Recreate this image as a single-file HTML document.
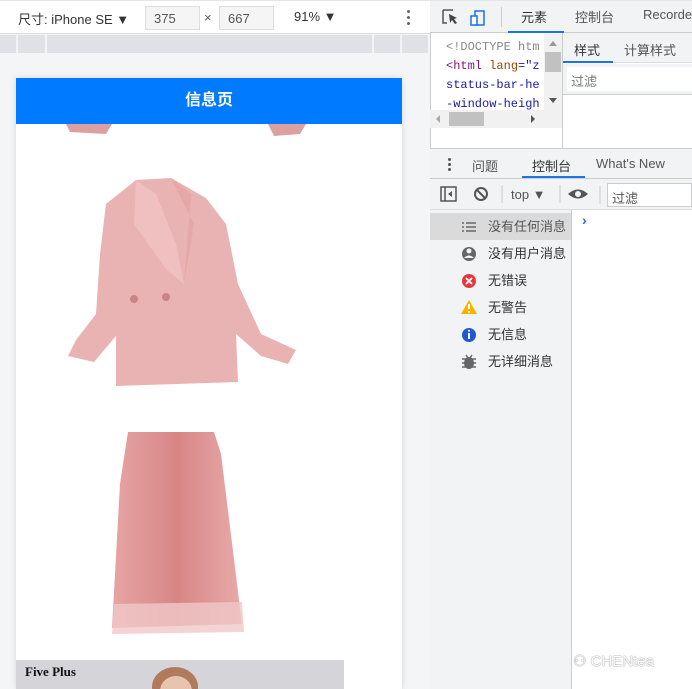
<!DOCTYPE html>
<html><head><meta charset="utf-8"><style>
*{margin:0;padding:0;box-sizing:border-box}
html,body{width:692px;height:689px;overflow:hidden}
body{position:relative;background:#f4f5f6;font-family:"Liberation Sans","Noto Sans CJK SC",sans-serif;font-size:13px;color:#333}
.a{position:absolute}
.mono{font-family:"Liberation Mono",monospace;font-size:12px}
</style></head><body>
<div class="a" style="left:0;top:0;width:430px;height:34px;background:#fff;border-bottom:1px solid #ddd;border-top:1px solid #e5e5e5"></div>
<div class="a" style="left:18px;top:9px;font-size:13px;color:#333">尺寸: iPhone SE ▼</div>
<div class="a" style="left:145px;top:6px;width:55px;height:24px;border:1px solid #ddd;background:#f5f5f5;color:#555;padding:4px 8px">375</div>
<div class="a" style="left:204px;top:10px;color:#555">×</div>
<div class="a" style="left:219px;top:6px;width:55px;height:24px;border:1px solid #ddd;background:#f5f5f5;color:#555;padding:4px 8px">667</div>
<div class="a" style="left:294px;top:9px;color:#333">91% ▼</div>
<div class="a" style="left:407px;top:10px;width:3px;height:3px;background:#666;border-radius:50%;box-shadow:0 6px 0 #666,0 12px 0 #666"></div>
<div class="a" style="left:0;top:35px;width:428px;height:18px;background:#dfe1e5"></div>
<div class="a" style="left:16px;top:35px;width:2px;height:18px;background:#f3f3f3"></div>
<div class="a" style="left:45px;top:35px;width:2px;height:18px;background:#f3f3f3"></div>
<div class="a" style="left:372px;top:35px;width:2px;height:18px;background:#f3f3f3"></div>
<div class="a" style="left:400px;top:35px;width:2px;height:18px;background:#f3f3f3"></div>
<div class="a" style="left:16px;top:78px;width:386px;height:611px;background:#fff;box-shadow:0 0 6px rgba(0,0,0,.12)"></div>
<div class="a" style="left:16px;top:78px;width:386px;height:46px;background:#007aff;color:#fff;font-weight:bold;font-size:16px;text-align:center;line-height:46px">信息页</div>
<svg class="a" style="left:16px;top:124px" width="386" height="536">
<defs><linearGradient id="sk" x1="0" x2="1"><stop offset="0" stop-color="#e7a4a4"/><stop offset=".5" stop-color="#d88686"/><stop offset="1" stop-color="#e8aaaa"/></linearGradient></defs>
<path d="M50 0 L96 0 L90 10 L54 8Z" fill="#dca0a0"/>
<path d="M252 0 L290 0 L284 10 L258 12Z" fill="#dca0a0"/>
<path d="M90 80 L120 56 L155 54 L190 74 L210 100 L222 160 L245 210 L280 226 L272 240 L245 232 L220 210 L222 258 L100 262 L100 212 L78 238 L52 232 L60 216 L80 190 L84 130Z" fill="#eab3b3"/>
<path d="M120 56 L140 70 L160 120 L168 160 L150 145 L118 100Z" fill="#f0c0c0"/>
<path d="M155 54 L175 70 L168 160 L178 100Z" fill="#e4a8a8"/>
<circle cx="118" cy="175" r="4" fill="#c98585"/><circle cx="150" cy="173" r="4" fill="#c98585"/>
<path d="M112 308 L198 308 L205 330 L226 500 L96 504 L104 360Z" fill="url(#sk)"/>
<path d="M98 480 L226 478 L228 508 L96 510Z" fill="#f0c8c8" opacity=".8"/>
</svg>
<div class="a" style="left:16px;top:660px;width:328px;height:29px;background:#d4d4d9"></div>
<div class="a" style="left:25px;top:664px;font-family:'Liberation Serif',serif;font-weight:bold;font-size:13px;color:#111">Five Plus</div>
<div class="a" style="left:152px;top:667px;width:46px;height:40px;border-radius:50%;background:#b07a5e"></div>
<div class="a" style="left:160px;top:676px;width:32px;height:30px;border-radius:50%;background:#e8c4ae"></div>
<div class="a" style="left:430px;top:0;width:262px;height:689px;background:#fff;border-left:1px solid #ccc"></div>
<div class="a" style="left:430px;top:0;width:262px;height:33px;background:#f1f3f4;border-bottom:1px solid #ccc;border-top:1px solid #e5e5e5"></div>
<svg class="a" style="left:441px;top:8px" width="60" height="18"><path d="M2 2h10M2 2v13h4" stroke="#555" fill="none" stroke-width="1.5"/><path d="M8 6l8 4-3 1 3 4-2 1-3-4-2 3z" fill="#444"/><rect x="34" y="3" width="9" height="14" fill="none" stroke="#1a73e8" stroke-width="1.5"/><rect x="30" y="8" width="6" height="9" fill="#fff" stroke="#1a73e8" stroke-width="1.5"/></svg>
<div class="a" style="left:501px;top:7px;width:1px;height:20px;background:#ccc"></div>
<div class="a" style="left:521px;top:7px;color:#333">元素</div>
<div class="a" style="left:508px;top:31px;width:56px;height:2px;background:#1a73e8"></div>
<div class="a" style="left:575px;top:7px;color:#555">控制台</div>
<div class="a" style="left:643px;top:7px;color:#555;white-space:nowrap">Recorde</div>
<div class="a mono" style="left:446px;top:38px;line-height:19px;white-space:pre;color:#888">&lt;!DOCTYPE htm</div>
<div class="a mono" style="left:446px;top:57px;line-height:19px;white-space:pre"><span style="color:#881280">&lt;html</span> <span style="color:#994500">lang</span><span style="color:#1a1aa6">="z</span></div>
<div class="a mono" style="left:446px;top:76px;line-height:19px;color:#1a1aa6">status-bar-he</div>
<div class="a mono" style="left:446px;top:95px;line-height:19px;color:#1a1aa6">-window-heigh</div>
<div class="a" style="left:544px;top:34px;width:18px;height:76px;background:#f1f1f1"></div>
<div class="a" style="left:545px;top:52px;width:16px;height:20px;background:#c1c1c1"></div>
<div class="a" style="left:549px;top:41px;border:4px solid transparent;border-bottom:5px solid #999;border-top:0"></div>
<div class="a" style="left:549px;top:98px;border:4px solid transparent;border-top:5px solid #555;border-bottom:0"></div>
<div class="a" style="left:430px;top:110px;width:132px;height:18px;background:#f1f1f1"></div>
<div class="a" style="left:449px;top:112px;width:35px;height:14px;background:#c1c1c1"></div>
<div class="a" style="left:436px;top:115px;border:4px solid transparent;border-right:4px solid #aaa;border-left:0"></div>
<div class="a" style="left:531px;top:115px;border:4px solid transparent;border-left:4px solid #555;border-right:0"></div>
<div class="a" style="left:562px;top:33px;width:1px;height:115px;background:#ccc"></div>
<div class="a" style="left:563px;top:33px;width:129px;height:30px;background:#f1f3f4;border-bottom:1px solid #ddd"></div>
<div class="a" style="left:574px;top:40px;color:#333">样式</div>
<div class="a" style="left:563px;top:61px;width:50px;height:2px;background:#1a73e8"></div>
<div class="a" style="left:624px;top:40px;color:#555">计算样式</div>
<div class="a" style="left:563px;top:64px;width:129px;height:31px;background:#f1f3f4;border-bottom:1px solid #ccc"></div>
<div class="a" style="left:567px;top:67px;width:125px;height:24px;background:#fff;color:#777;padding:4px 4px">过滤</div>
<div class="a" style="left:430px;top:148px;width:262px;height:31px;background:#f1f3f4;border-top:1px solid #ccc;border-bottom:1px solid #ccc"></div>
<div class="a" style="left:448px;top:158px;width:3px;height:3px;background:#555;border-radius:50%;box-shadow:0 5px 0 #555,0 10px 0 #555"></div>
<div class="a" style="left:472px;top:156px;color:#555">问题</div>
<div class="a" style="left:532px;top:156px;color:#333">控制台</div>
<div class="a" style="left:522px;top:176px;width:63px;height:2px;background:#1a73e8"></div>
<div class="a" style="left:596px;top:156px;color:#555">What's New</div>
<div class="a" style="left:430px;top:179px;width:262px;height:31px;background:#f1f3f4;border-bottom:1px solid #ddd"></div>
<svg class="a" style="left:440px;top:185px" width="130" height="20"><rect x="1" y="2" width="15" height="14" fill="none" stroke="#555" stroke-width="1.5"/><path d="M5 2v14" stroke="#555" stroke-width="1.5"/><path d="M12 6l-4 3 4 3z" fill="#555"/><circle cx="41" cy="9" r="6" fill="none" stroke="#555" stroke-width="2"/><path d="M37 5l8 8" stroke="#555" stroke-width="2"/><path d="M62 0v18M120 0v18" stroke="#ccc"/></svg>
<div class="a" style="left:511px;top:187px;color:#555">top ▼</div>
<svg class="a" style="left:567px;top:186px" width="40" height="18"><path d="M1 8q10-9 20 0q-10 9-20 0z" fill="#555"/><circle cx="11" cy="8" r="3" fill="#f1f3f4"/><path d="M33 0v18" stroke="#ccc"/></svg>
<div class="a" style="left:607px;top:183px;width:85px;height:24px;background:#fff;border:1px solid #ccc;color:#555;padding:4px 4px">过滤</div>
<div class="a" style="left:430px;top:210px;width:142px;height:479px;background:#f1f3f4;border-right:1px solid #ccc"></div>
<div class="a" style="left:430px;top:213px;width:141px;height:27px;background:#dadada"></div>
<svg class="a" style="left:460px;top:218px" width="18" height="156">
<path d="M2 5h2M6 5h10M2 9h2M6 9h10M2 13h2M6 13h10" stroke="#666" stroke-width="1.6"/>
<circle cx="9" cy="36" r="7" fill="#666"/><circle cx="9" cy="33" r="2.5" fill="#f1f3f4"/><path d="M4 40q5-5 10 0" fill="#f1f3f4"/>
<circle cx="9" cy="63" r="7" fill="#e8363d"/><path d="M6 60l6 6M12 60l-6 6" stroke="#fff" stroke-width="1.8"/>
<path d="M9 82l8 14H1z" fill="#f5b400"/><path d="M9 86v5M9 93v1.5" stroke="#fff" stroke-width="2"/>
<circle cx="9" cy="117" r="7" fill="#1e58d6"/><path d="M9 115v6M9 112v1.5" stroke="#fff" stroke-width="2"/>
<ellipse cx="9" cy="145" rx="5" ry="6" fill="#666"/><path d="M2 141h14M2 145h14M2 149h14M6 137l2 3M12 137l-2 3" stroke="#666" stroke-width="1.5"/>
</svg>
<div class="a" style="left:488px;top:218px;color:#555;line-height:17px">没有任何消息</div>
<div class="a" style="left:488px;top:245px;color:#333;line-height:17px">没有用户消息</div>
<div class="a" style="left:488px;top:272px;color:#333;line-height:17px">无错误</div>
<div class="a" style="left:488px;top:299px;color:#333;line-height:17px">无警告</div>
<div class="a" style="left:488px;top:326px;color:#333;line-height:17px">无信息</div>
<div class="a" style="left:488px;top:353px;color:#333;line-height:17px">无详细消息</div>
<div class="a" style="left:582px;top:212px;color:#1a73e8;font-size:14px;font-weight:bold">›</div>
<div class="a" style="left:573px;top:652px;color:#fff;font-size:15px;text-shadow:0 0 1px #888,0 0 1px #888">⚇ CHENtea</div>
</body></html>
